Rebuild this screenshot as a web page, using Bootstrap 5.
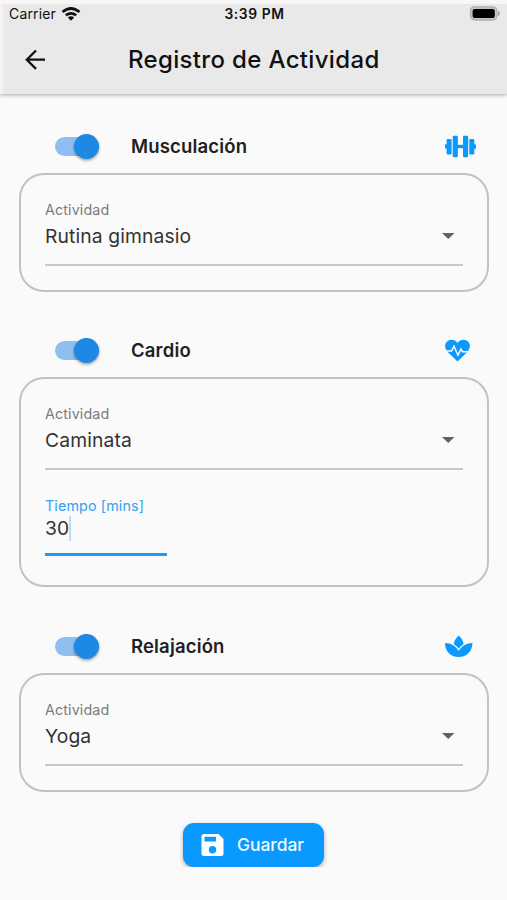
<!DOCTYPE html>
<html lang="es">
<head>
<meta charset="utf-8">
<meta name="viewport" content="width=device-width, initial-scale=1">
<title>Registro de Actividad</title>
<link href="https://cdn.jsdelivr.net/npm/bootstrap@5.3.0/dist/css/bootstrap.min.css" rel="stylesheet">
<style>
  body { font-family: Inter, "Liberation Sans", sans-serif; background: #fafafa; color: #212121; overflow: hidden; }
  svg { display: block; }
  .top-bar { height: 94px; background: linear-gradient(90deg, #f6f6f6 0, #e9e9e9 5px); border-top: 4px solid #f7f7f7; box-shadow: 0 1px 4px rgba(0,0,0,.34); color: #111; }
  .status { height: 20px; font-size: 14px; line-height: 20px; padding: 0 7px 0 9px; letter-spacing: .15px; }
  .status > div { flex: 1 1 0; }
  .wifi { margin-left: -3px; }
  .status .clock { font-weight: 600; font-size: 13.8px; letter-spacing: .6px; }
  .title-row { height: 71px; padding-left: 24px; }
  .title-row h1 { font-size: 24px; font-weight: 500; line-height: 30px; margin: 0 0 0 80px; letter-spacing: .34px; color: #111; }
  main { padding: 25px 18px 0 19px; }
  .activity-head { height: 54px; padding: 0 0 0 36px; }
  .activity-head h2 { font-size: 18.5px; font-weight: 600; line-height: 24px; margin: 0 0 0 32px; letter-spacing: .17px; }
  .toggle { width: 44px; height: 26px; padding: 4px 0; }
  .toggle-track { height: 18.5px; border-radius: 10px; background: #8ebff0; }
  .toggle-thumb { width: 25px; height: 25px; margin-top: -3.3px; background: #1e88e5; box-shadow: 0 1.5px 3px rgba(0,0,0,.38); }
  .activity-icon { width: 44.5px; color: #0d99fc; }
  .panel { border: 2px solid #c2c2c2; border-radius: 25px; height: 119px; padding: 26px 24px 0; margin-bottom: 31px; }
  .panel.tall { height: 210px; margin-bottom: 32px; }
  .field { height: 65px; border-bottom: 2px solid #c8c8c8; }
  .field-label { font-size: 14.3px; line-height: 18px; color: #7b7b7b; letter-spacing: .13px; }
  .field-value { font-size: 19.3px; line-height: 26px; margin-top: 4px; color: #333; letter-spacing: .12px; }
  .field.time { width: 122px; height: 59px; margin-top: 27px; border-bottom: 3px solid #1e9df0; }
  .time .field-label { color: #36a0ef; }
  .time .field-value { margin-top: 0; }
  .caret { width: 2px; height: 25px; background: #b9dcfa; }
  .save { width: 141px; height: 44px; border-radius: 11px; background: #0a99ff; color: #f2faff; font-size: 17.4px; font-weight: 500; box-shadow: 0 2px 4px rgba(0,0,0,.32); padding: 0 0 0 16px; border: 0; margin-left: 164px; }
</style>
</head>
<body>
<header class="top-bar">
  <div class="status d-flex align-items-center">
    <div class="d-flex align-items-center gap-2">
      <span>Carrier</span>
      <svg class="wifi" width="20" height="14" viewBox="0 0 20 14" fill="none" stroke="#111" stroke-width="2.7"><path d="M1.500 5Q10-2 18.500 5M4.800 8.300Q10 4.300 15.200 8.300"/><path d="M6.800 10.500Q10 8 13.200 10.500L10 13.700Z" fill="#111" stroke="none"/></svg>
    </div>
    <span class="clock text-center">3:39 PM</span>
    <div class="d-flex justify-content-end">
      <svg width="31" height="16" viewBox="0 0 31 16"><rect x="1.500" y=".8" width="26.400" height="13.200" rx="4" fill="#c4c4c4" stroke="#b0b0b0" stroke-width="1.300"/><rect x="3.600" y="2.900" width="22.200" height="9" rx="2" fill="#000"/><path d="M29 5Q31 5.500 31 7.400T29 10Z" fill="#a5a5a5"/></svg>
    </div>
  </div>
  <div class="title-row d-flex align-items-center">
    <svg width="24" height="24" viewBox="0 0 24 24" fill="none" stroke="#111" stroke-width="2.300"><path d="M21 11.700H3.500M12 2.500 2.800 11.700l9.200 9.200"/></svg>
    <h1>Registro de Actividad</h1>
  </div>
</header>
<main>
  <section>
    <div class="activity-head d-flex align-items-center">
      <div class="toggle"><div class="toggle-track d-flex justify-content-end"><div class="toggle-thumb rounded-circle flex-shrink-0"></div></div></div>
      <h2>Musculación</h2>
      <svg class="activity-icon ms-auto" height="24" viewBox="0 0 44.5 24" fill="currentColor"><rect y="10.200" width="3" height="4.600" rx="1"/><rect x="1.600" y="5" width="5" height="15.500" rx="1.300"/><rect x="7.700" y="1.800" width="5.200" height="21.500" rx="1.300"/><rect x="12" y="10.800" width="7" height="3.400"/><rect x="18" y="1.800" width="5.200" height="21.500" rx="1.300"/><rect x="24.300" y="5" width="5" height="15.500" rx="1.300"/><rect x="28" y="10.200" width="3" height="4.600" rx="1"/></svg>
    </div>
    <div class="panel">
      <div class="field">
        <div class="field-label">Actividad</div>
        <div class="field-value d-flex align-items-center justify-content-between"><span>Rutina gimnasio</span><svg width="30" height="6" viewBox="0 0 30 6" fill="#616161"><path d="M9 0h12.500l-6.250 6z"/></svg></div>
      </div>
    </div>
  </section>
  <section>
    <div class="activity-head d-flex align-items-center">
      <div class="toggle"><div class="toggle-track d-flex justify-content-end"><div class="toggle-thumb rounded-circle flex-shrink-0"></div></div></div>
      <h2>Cardio</h2>
      <svg class="activity-icon ms-auto" height="24" viewBox="0 0 44.5 24" fill="currentColor"><path d="M12.500 23.500 2.500 13.700C-1 10-.3 5 2.700 3 6 .8 10 1.500 12.500 5 15 1.500 19 .8 22.300 3c3 2 3.700 7 .2 10.700Z"/><path d="M0 13h6.500L9 8.300l4 9 3-6.200 1.600 2.600H25" fill="none" stroke="#fafafa" stroke-width="1.500"/></svg>
    </div>
    <div class="panel tall">
      <div class="field">
        <div class="field-label">Actividad</div>
        <div class="field-value d-flex align-items-center justify-content-between"><span>Caminata</span><svg width="30" height="6" viewBox="0 0 30 6" fill="#616161"><path d="M9 0h12.500l-6.250 6z"/></svg></div>
      </div>
      <div class="field time">
        <div class="field-label">Tiempo [mins]</div>
        <div class="field-value d-flex align-items-center"><span>30</span><span class="caret"></span></div>
      </div>
    </div>
  </section>
  <section>
    <div class="activity-head d-flex align-items-center">
      <div class="toggle"><div class="toggle-track d-flex justify-content-end"><div class="toggle-thumb rounded-circle flex-shrink-0"></div></div></div>
      <h2>Relajación</h2>
      <svg class="activity-icon ms-auto" height="24" viewBox="0 0 44.5 24" fill="currentColor"><path d="M13.700 1.500C17 4.500 18.500 7.700 18.500 10.300 16.500 11.500 14.800 13 13.700 14.700 12.600 13 10.900 11.500 8.900 10.300 8.900 7.700 10.400 4.500 13.700 1.500Z"/><path d="M0 9C6 9 11 12 13.700 17 16.400 12 21.400 9 27.400 9 27.400 17 22 23 13.700 23S0 17 0 9Z"/></svg>
    </div>
    <div class="panel">
      <div class="field">
        <div class="field-label">Actividad</div>
        <div class="field-value d-flex align-items-center justify-content-between"><span>Yoga</span><svg width="30" height="6" viewBox="0 0 30 6" fill="#616161"><path d="M9 0h12.500l-6.250 6z"/></svg></div>
      </div>
    </div>
  </section>
  <button class="save btn d-flex align-items-center" type="button">
    <svg width="26" height="26" viewBox="0 0 26 26"><path fill="#fff" fill-rule="evenodd" d="M5 2h14.500L24.500 7v14.500a2.500 2.500 0 0 1-2.500 2.500H5A2.500 2.500 0 0 1 2.500 21.500v-17A2.500 2.500 0 0 1 5 2ZM5.500 4.800v4.700H17V4.800ZM13.500 14a3.700 3.700 0 1 0 0 7.400 3.700 3.700 0 0 0 0-7.400Z"/></svg>
    <span class="ms-2 ps-1">Guardar</span>
  </button>
</main>
<script src="https://cdn.jsdelivr.net/npm/bootstrap@5.3.0/dist/js/bootstrap.bundle.min.js"></script>
</body>
</html>
